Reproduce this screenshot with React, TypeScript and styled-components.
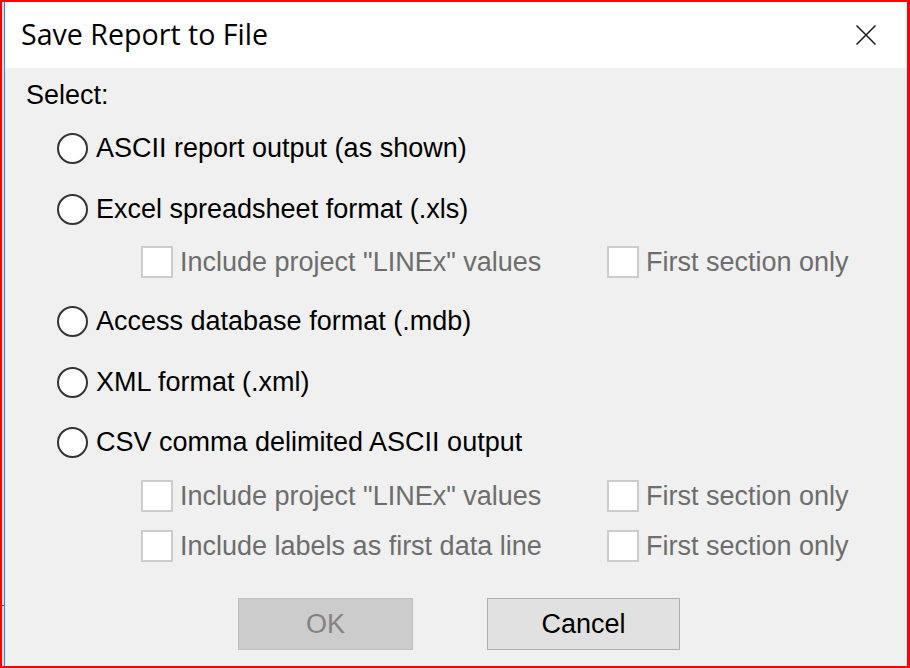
import React from "react";
import styled, { createGlobalStyle } from "styled-components";

const Global = createGlobalStyle`
  html, body { margin: 0; padding: 0; background: #ffffff; }
  body { width: 910px; height: 668px; overflow: hidden; }
`;

const Frame = styled.div`
  box-sizing: border-box;
  width: 910px;
  height: 668px;
  border-top: 2px solid #ff0000;
  border-left: 2px solid #ff0000;
  border-right: 3px solid #ff0000;
  border-bottom: 2px solid #ff0000;
  display: flex;
`;

const EdgeStrip = styled.div`
  width: 2px;
  background: #dcdcdc;
  border-right: 1px solid #1a8cff;
  flex: none;
  position: relative;
  &::after {
    content: "";
    position: absolute;
    left: 0;
    top: 603px;
    width: 2px;
    height: 1px;
    background: #555;
  }
`;

const Window = styled.div`
  flex: 1;
  display: flex;
  flex-direction: column;
  background: #f0f0f0;
`;

const TitleBar = styled.div`
  height: 66px;
  flex: none;
  background: #ffffff;
  display: flex;
  align-items: center;
  justify-content: space-between;
  padding: 0 31px 0 16px;
`;

const Title = styled.div`
  font-family: "Open Sans", "Noto Sans", sans-serif;
  font-size: 28.6px;
  color: #000;
  margin-top: -4px;
`;

const CloseIcon = styled.svg`
  width: 20px;
  height: 20px;
  display: block;
`;

const Body = styled.div`
  display: flex;
  flex-direction: column;
  font-family: "Liberation Sans", Arial, sans-serif;
  font-size: 27px;
`;

const Row = styled.div<{ $gap: number; $indent: number }>`
  height: 40px;
  margin-top: ${(p) => p.$gap}px;
  padding-left: ${(p) => p.$indent}px;
  display: flex;
  align-items: center;
`;

const Label = styled.span<{ $muted?: boolean }>`
  color: ${(p) => (p.$muted ? "#6d6d6d" : "#000000")};
  white-space: nowrap;
`;

const Radio = styled.span`
  box-sizing: border-box;
  width: 31px;
  height: 31px;
  border-radius: 50%;
  border: 2px solid #333333;
  background: #ffffff;
  flex: none;
  margin-right: 8px;
`;

const CheckItem = styled.div<{ $width?: number }>`
  display: flex;
  align-items: center;
  width: ${(p) => (p.$width ? `${p.$width}px` : "auto")};
`;

const Box = styled.span`
  box-sizing: border-box;
  width: 32px;
  height: 32px;
  border: 2px solid #cccccc;
  background: #ffffff;
  flex: none;
  margin-right: 7px;
`;

const ButtonRow = styled.div`
  display: flex;
  gap: 74px;
  margin-top: 32px;
  padding-left: 233px;
`;

const Button = styled.button<{ $disabled?: boolean }>`
  box-sizing: border-box;
  height: 52px;
  width: ${(p) => (p.$disabled ? 175 : 193)}px;
  background: ${(p) => (p.$disabled ? "#cccccc" : "#e1e1e1")};
  border: 1px solid ${(p) => (p.$disabled ? "#bfbfbf" : "#adadad")};
  color: ${(p) => (p.$disabled ? "#838383" : "#000000")};
  font-family: "Liberation Sans", Arial, sans-serif;
  font-size: 27px;
  padding: 0;
  margin: 0;
  border-radius: 0;
`;

const RadioRow = ({ gap, text }: { gap: number; text: string }) => (
  <Row $gap={gap} $indent={52}>
    <Radio />
    <Label>{text}</Label>
  </Row>
);

const CheckRow = ({ gap, left, right }: { gap: number; left: string; right: string }) => (
  <Row $gap={gap} $indent={136}>
    <CheckItem $width={466}>
      <Box />
      <Label $muted>{left}</Label>
    </CheckItem>
    <CheckItem>
      <Box />
      <Label $muted>{right}</Label>
    </CheckItem>
  </Row>
);

export default function App() {
  return (
    <>
      <Global />
      <Frame>
        <EdgeStrip />
        <Window>
          <TitleBar>
            <Title>Save Report to File</Title>
            <CloseIcon viewBox="0 0 20 20">
              <path d="M0.5 0.5 L19.5 19.5 M19.5 0.5 L0.5 19.5" stroke="#1a1a1a" strokeWidth="1.5" fill="none" />
            </CloseIcon>
          </TitleBar>
          <Body>
            <Row $gap={7} $indent={21}>
              <Label>Select:</Label>
            </Row>
            <RadioRow gap={13} text="ASCII report output (as shown)" />
            <RadioRow gap={21} text="Excel spreadsheet format (.xls)" />
            <CheckRow gap={13} left={'Include project "LINEx" values'} right="First section only" />
            <RadioRow gap={19} text="Access database format (.mdb)" />
            <RadioRow gap={21} text="XML format (.xml)" />
            <RadioRow gap={20} text="CSV comma delimited ASCII output" />
            <CheckRow gap={14} left={'Include project "LINEx" values'} right="First section only" />
            <CheckRow gap={10} left="Include labels as first data line" right="First section only" />
            <ButtonRow>
              <Button $disabled>OK</Button>
              <Button>Cancel</Button>
            </ButtonRow>
          </Body>
        </Window>
      </Frame>
    </>
  );
}
